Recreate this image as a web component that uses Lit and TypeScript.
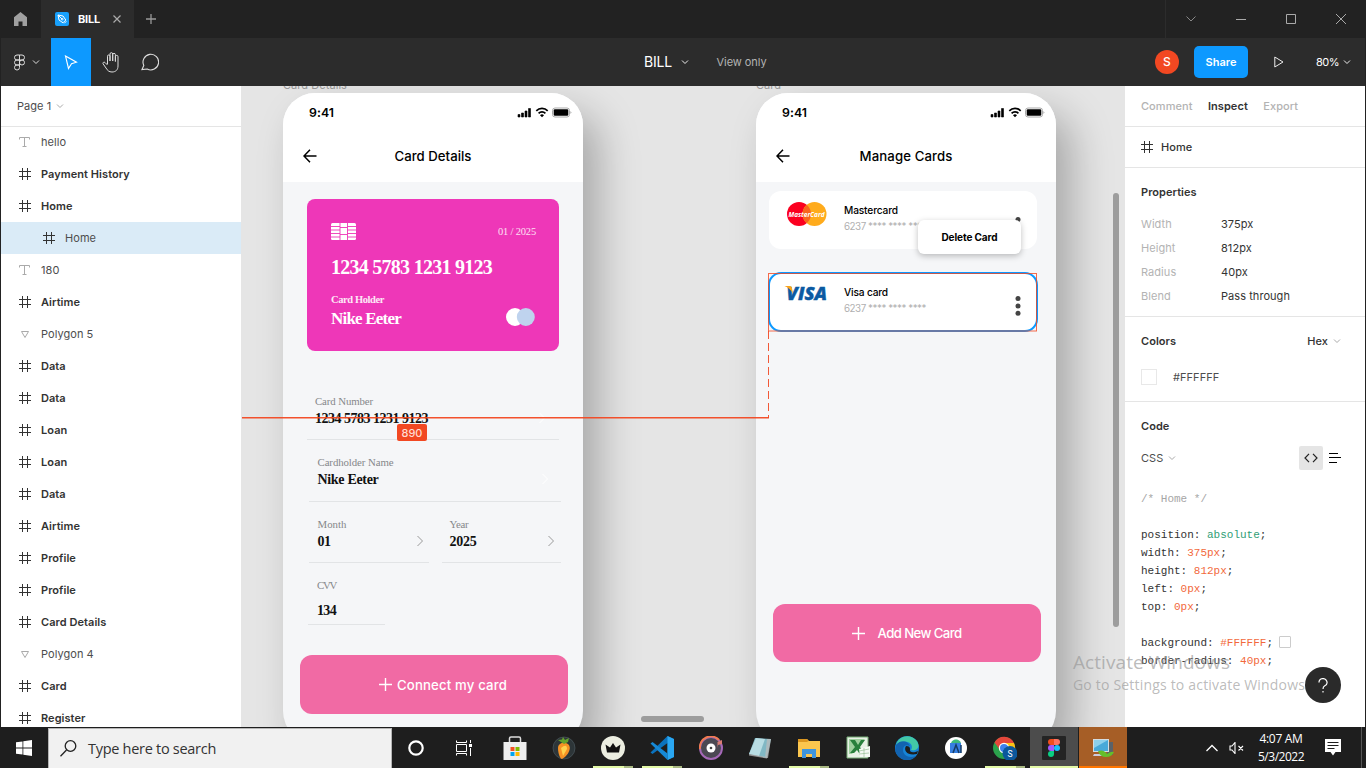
import { LitElement, html, svg, css } from "lit";
import { customElement, property } from "lit/decorators.js";

/** One line of text whose tracking is set so that it fills a given width. */
@customElement("fit-text")
class FitText extends LitElement {
  @property({ type: Number }) w = 0;
  @property() text = "";
  static styles = css`
    :host { display: block; white-space: pre; flex: none; }
    span { display: inline-block; }
  `;
  render() { return html`<span>${this.text}</span>`; }
  updated() {
    const s = this.renderRoot.querySelector("span") as HTMLElement;
    if (!s || !this.w) return;
    s.style.letterSpacing = "0px";
    const natural = s.getBoundingClientRect().width;
    s.style.letterSpacing = `${(this.w - natural) / this.text.length}px`;
  }
}

const fit = (text: string, w: number, cls: string) =>
  html`<fit-text class=${cls} .text=${text} .w=${w}></fit-text>`;

const hash = html`<svg class="ic" width="12" height="12" viewBox="0 0 12 12" fill="none" stroke="#333"><path d="M3.5 0v12M8.500 0v12M0 3.500h12M0 8.500h12"/></svg>`;
const tee = html`<svg class="ic" width="12" height="12" viewBox="0 0 12 12" fill="none" stroke="#aaa"><path d="M.5 3.500v-2h10v2M5.500 1.500v9.500M3.500 10.500h4"/></svg>`;
const poly = html`<svg class="ic" width="12" height="12" viewBox="0 0 12 12" fill="none" stroke="#aaa"><path d="M2.500 3.500h7L6 9.500z"/></svg>`;
const chev = (c: string, w = 8) => html`<svg width=${w} height=${w} viewBox="0 0 8 8" fill="none" stroke=${c} stroke-width="1"><path d="M1 2.500l3 3 3-3"/></svg>`;
const right = (c: string) => html`<svg width="7" height="12" viewBox="0 0 7 12" fill="none" stroke=${c}><path d="M.5 1l5 5-5 5"/></svg>`;
const plus = html`<svg width="13" height="13" viewBox="0 0 13 13" stroke="#fff" stroke-width="1.400"><path d="M6.500 0v13M0 6.500h13"/></svg>`;

const LAYERS: [string, string][] = [
  ["t", "hello"], ["f", "Payment History"], ["f", "Home"], ["s", "Home"], ["t", "180"],
  ["f", "Airtime"], ["p", "Polygon 5"], ["f", "Data"], ["f", "Data"], ["f", "Loan"], ["f", "Loan"],
  ["f", "Data"], ["f", "Airtime"], ["f", "Profile"], ["f", "Profile"], ["f", "Card Details"],
  ["p", "Polygon 4"], ["f", "Card"], ["f", "Register"],
];

@customElement("layer-panel")
class LayerPanel extends LitElement {
  static styles = css`
    :host { display: block; width: 240px; background: #fff; overflow: hidden; font: 11px/16px Inter, sans-serif; letter-spacing: .055px; color: #333; }
    .head { height: 40px; border-bottom: 1px solid #e5e5e5; margin-bottom: -1px; display: flex; align-items: center; padding-left: 16px; gap: 5px; color: #4c4c4c; }
    .row { height: 32px; display: flex; align-items: center; padding-left: 18px; gap: 10px; position: relative; }
    .f { font-weight: 600; }
    .t, .p, .s { color: #4d4d4d; }
    .s { background: #daebf7; padding-left: 42px; }
  `;
  render() {
    return html`<div class="head"><span>Page 1</span>${chev("#aaa")}</div>
      ${LAYERS.map(([k, n]) => html`<div class="row ${k}">${k === "t" ? tee : k === "p" ? poly : hash}<span>${n}</span></div>`)}`;
  }
}

@customElement("inspect-panel")
class InspectPanel extends LitElement {
  static styles = css`
    :host { display: block; width: 240px; background: #fff; overflow: hidden; font: 11px/16px Inter, sans-serif; letter-spacing: .055px; color: #333; }
    .sec { border-bottom: 1px solid #e5e5e5; box-sizing: border-box; padding: 0 16px; }
    .row { display: flex; align-items: center; }
    .tabs { height: 41px; gap: 15.500px; font-weight: 500; color: #b3b3b3; }
    .on { color: #333; font-weight: 600; }
    .name { height: 41px; gap: 8px; font-weight: 500; }
    .props { height: 149px; padding-top: 12px; }
    .prop { height: 24px; }
    .prop span:first-child { width: 80px; color: #b3b3b3; }
    .ttl { height: 24px; margin-bottom: 8px; font-weight: 600; }
    .colors { height: 85px; padding-top: 12px; }
    .colors .ttl { margin-bottom: 12px; }
    .hex { margin-left: auto; margin-right: 5px; font-weight: 500; }
    .ttl svg { margin-right: 8px; }
    .sw { width: 14px; height: 14px; border: 1px solid #e8e8e8; margin-right: 16px; }
    .val { color: #4d4d4d; }
    .code { padding: 12px 16px 0; }
    .lang { height: 24px; gap: 5px; color: #4d4d4d; }
    .btn { margin-left: auto; width: 24px; height: 24px; background: #e5e5e5; border-radius: 2px; display: flex; align-items: center; justify-content: center; }
    .lines { margin: 0 8px 0 1px; }
    pre { margin: 20px 0 0; font: 11px/18px "Liberation Mono", monospace; letter-spacing: 0; color: #333; }
    .c { color: #a6a6a6; } .g { color: #2f9e75; } .o { color: #f2693c; }
    .box { display: inline-block; width: 10px; height: 10px; border: 1px solid #ccc; border-radius: 1px; vertical-align: -2px; margin-left: 6px; }
  `;
  render() {
    const p = (a: string, b: string) => html`<div class="row prop"><span>${a}</span><span>${b}</span></div>`;
    const o = (s: string) => html`<span class="o">${s}</span>`;
    return html`
      <div class="sec row tabs"><span>Comment</span><span class="on">Inspect</span><span>Export</span></div>
      <div class="sec row name">${hash}<span>Home</span></div>
      <div class="sec props"><div class="row ttl">Properties</div>
        ${p("Width", "375px")}${p("Height", "812px")}${p("Radius", "40px")}${p("Blend", "Pass through")}</div>
      <div class="sec colors"><div class="row ttl">Colors<span class="hex">Hex</span>${chev("#aaa")}</div>
        <div class="row prop"><div class="sw"></div><div class="val">#FFFFFF</div></div></div>
      <div class="code"><div class="row ttl">Code</div>
        <div class="row lang">CSS ${chev("#aaa")}
          <div class="btn"><svg width="14" height="10" viewBox="0 0 14 10" fill="none" stroke="#222" stroke-width="1.200"><path d="M5 .8L1 5l4 4.200M9 .8L13 5 9 9.200"/></svg></div>
          <svg class="lines" width="12" height="10" viewBox="0 0 12 10" stroke="#000"><path d="M0 .5h9M0 4.500h12M0 9.500h8"/></svg></div>
        <pre><span class="c">/* Home */</span>

position: <span class="g">absolute</span>;
width: ${o("375px")};
height: ${o("812px")};
left: ${o("0px")};
top: ${o("0px")};

background: ${o("#FFFFFF")};<span class="box"></span>
border-radius: ${o("40px")};</pre></div>`;
  }
}

const phoneCss = css`
  :host { display: block; box-sizing: border-box; width: 300px; height: 650px; border-radius: 32px; overflow: hidden; background: #f5f6f8; font-family: Inter, sans-serif; color: #000; }
  .head { height: 89px; background: #fff; }
  .status { height: 38px; display: flex; align-items: center; padding: 0 11px 0 26px; justify-content: space-between; }
  .time { font-size: 12.300px; font-weight: 600; line-height: 16px; margin-top: 1px; }
  .bar { height: 51px; display: grid; grid-template-columns: 60px 1fr 60px; align-items: center; justify-items: center; }
  .bar svg { justify-self: start; margin: 0 0 1px 19.500px; }
  .title { font-size: 13.200px; font-weight: 500; line-height: 18px; margin-bottom: 2px; }
  .cta { width: 268px; height: 58px; border-radius: 12px; background: #f16aa4; box-sizing: border-box; display: flex; align-items: center; color: #fff; }
  .ctat { font-size: 13.200px; font-weight: 500; line-height: 18px; }
`;

const phoneHead = (title: string, w: number) => html`<div class="head">
  <div class="status">${fit("9:41", 25, "time")}
    <svg width="55" height="11" viewBox="0 0 55 11"><path d="M1 7.500h2V10H1zM4.500 6h2v4h-2zM8 4h2v6H8zM11.500 1.500h2V10h-2z" stroke="#000" stroke-width=".6"/>
      <g fill="none" stroke="#000" stroke-width="1.700"><path d="M19.300 3.800a8 8 0 0 1 11.400 0M21.600 6.300a4.800 4.800 0 0 1 6.800 0"/></g><path d="M23 8.200a3 3 0 0 1 4 0L25 10.300z"/>
      <rect x="35.500" y="1" width="17" height="9" rx="2.500" fill="none" stroke="#aaa"/><rect x="36.700" y="2.300" width="14.600" height="6.400" rx="1.200"/><path d="M53.500 4v3l1-1.500z" fill="#999"/></svg></div>
  <div class="bar"><svg width="14" height="14" viewBox="0 0 14 14" fill="none" stroke="#000" stroke-width="1.500"><path d="M7 .8L1 7l6 6.200M1 7h12.500"/></svg>${fit(title, w, "title")}</div></div>`;

@customElement("phone-details")
class PhoneDetails extends LitElement {
  static styles = [phoneCss, css`
    .body { padding: 16.500px 0 0; font-family: "Liberation Serif", serif; }
    .card { margin-left: 24px; width: 252px; height: 152px; box-sizing: border-box; border-radius: 8px; background: #ee37b8; color: #fff; padding: 24.500px 23px 0 24px; }
    .between { display: flex; justify-content: space-between; align-items: center; }
    .date { font-size: 10.500px; line-height: 14px; color: #fde0f4; }
    .num { font-size: 20px; font-weight: 700; line-height: 24px; margin-top: 15px; }
    .holder { font-size: 10.500px; line-height: 14px; font-weight: 700; margin-top: 14px; color: #fde8f6; }
    .who { font-size: 17px; font-weight: 700; line-height: 23px; }
    .who + svg { margin-bottom: 3px; }
    .field { box-sizing: border-box; border-bottom: 1px solid #e2e4e6; margin-left: 26px; width: 252px; height: 62px; padding: 14.500px 12px 0 8.500px; display: grid; grid-template-columns: 1fr auto; align-content: start; }
    .lab { font-size: 10.800px; line-height: 14px; color: #85878a; grid-column: 1 / 3; }
    .val { font-size: 14px; line-height: 20px; font-weight: 700; color: #111; margin-top: 1px; }
    .first { margin-left: 24px; margin-top: 33.500px; height: 56px; padding: 9.500px 13px 0 8px; }
    .pair { display: flex; gap: 13px; margin-left: 26px; }
    .pair .field { margin: 0; width: 120px; height: 61px; padding-right: 5px; }
    .pair .field + .field { padding-left: 7.500px; padding-right: 6px; width: 119px; }
    .field svg { align-self: center; }
    .cvv { margin-left: 25px; width: 77px; padding-top: 15px; padding-left: 9px; height: 62px; }
    .cvv .val { margin-top: 9px; }
    .cta { height: 59px; margin: 30px 0 0 17px; padding-left: 79px; gap: 5px; font-family: Inter, sans-serif; }
  `];
  render() {
    return html`${phoneHead("Card Details", 77)}<div class="body">
      <div class="card">
        <div class="between"><svg width="25" height="17" viewBox="0 0 25 17"><rect width="25" height="17" rx="1.500" fill="#fff"/><path d="M0 3.500h9M16 3.500h9M0 7h9M16 7h9M0 10.500h9M16 10.500h9M0 14h9M16 14h9M9 4.500h7M9 11.500h7M9 0v17M16.500 0v17" stroke="#ee37b8" stroke-width=".9"/></svg>${fit("01 / 2025", 38, "date")}</div>
        ${fit("1234 5783 1231 9123", 161, "num")}
        ${fit("Card Holder", 53, "holder")}
        <div class="between">${fit("Nike Eeter", 70, "who")}<svg width="30" height="18" viewBox="0 0 30 18"><circle cx="9" cy="9" r="9" fill="#fff"/><circle cx="19.800" cy="9" r="9" fill="#bfd3ee"/></svg></div>
      </div>
      <div class="field first">${fit("Card Number", 58, "lab")}${fit("1234 5783 1231 9123", 113, "val")}${right("#fff")}</div>
      <div class="field">${fit("Cardholder Name", 76, "lab")}${fit("Nike Eeter", 61, "val")}${right("#fff")}</div>
      <div class="pair">
        <div class="field">${fit("Month", 29, "lab")}${fit("01", 13, "val")}${right("#999")}</div>
        <div class="field">${fit("Year", 19, "lab")}${fit("2025", 27, "val")}${right("#999")}</div></div>
      <div class="field cvv">${fit("CVV", 19, "lab")}${fit("134", 19, "val")}</div>
      <div class="cta">${plus}${fit("Connect my card", 110, "ctat")}</div></div>`;
  }
}

@customElement("phone-manage")
class PhoneManage extends LitElement {
  static styles = [phoneCss, css`
    .body { padding: 9px 0 0 13px; }
    .pay { width: 268px; height: 58px; box-sizing: border-box; border-radius: 12px; background: #fff; display: flex; padding: 11px 16px 0 15px; }
    .pay + .pay { margin-top: 24px; }
    .logo { width: 60px; flex: none; }
    .nm { font-size: 10.200px; line-height: 16px; font-weight: 500; }
    .no { font-size: 9.800px; line-height: 18px; color: #b0b0b0; }
    .dots { margin-left: auto; margin-top: 11px; }
    .pop-open .dots { margin-top: 14px; }
    .sel { outline: 2px solid #0d99ff; outline-offset: -1px; }
    .cta { margin: 273px 0 0 3.500px; padding-left: 79px; gap: 13px; }
    .pop { position: absolute; left: 162px; top: 127px; width: 103px; height: 34px; border-radius: 6px; background: #fff; box-shadow: 0 2px 6px rgba(0,0,0,.25); display: flex; align-items: center; justify-content: center; }
    .del { font-size: 10px; line-height: 14px; font-weight: 700; }
    .mc { font: italic 700 7.200px "Open Sans", sans-serif; } .vs { font: italic 800 18px "Open Sans", sans-serif; }
  `];
  render() {
    const pay = (logo: unknown, n: string, w: number, c: string) => html`<div class="pay ${c}"><div class="logo">${logo}</div>
      <div>${fit(n, w, "nm")}${fit("6237 **** **** ****", 82, "no")}</div>
      <svg class="dots" width="6" height="22" viewBox="0 0 6 22" fill="#444"><circle cx="3" cy="3.500" r="2.500"/><circle cx="3" cy="11" r="2.500"/><circle cx="3" cy="18.200" r="2.500"/></svg></div>`;
    return html`${phoneHead("Manage Cards", 93)}<div class="body">
      ${pay(html`<svg width="46" height="26" viewBox="0 0 46 26"><circle cx="15" cy="12" r="12" fill="#fb0020"/><circle cx="30.500" cy="12" r="12" fill="#ffab1c"/><path d="M22.750 2.800a12 12 0 0 1 0 18.400a12 12 0 0 1 0-18.400z" fill="#f9651d"/><text class="mc" x="4.500" y="14.800" textLength="36" lengthAdjust="spacingAndGlyphs" fill="#fff">MasterCard</text></svg>`, "Mastercard", 54, "pop-open")}
      ${pay(html`<svg width="46" height="26" viewBox="0 0 46 26"><text class="vs" x="2.500" y="15.600" textLength="40.500" lengthAdjust="spacingAndGlyphs" fill="#0b5aa2" stroke="#0b5aa2" stroke-width=".4">VISA</text><path d="M.5 2h5.500q1.500 0 1.800 1.600l1.200 6Q6 4 .5 2z" fill="#f9a51a"/></svg>`, "Visa card", 44, "sel")}
      <div class="cta">${plus}${fit("Add New Card", 84, "ctat")}</div></div>
      <div class="pop">${fit("Delete Card", 56, "del")}</div>`;
  }
}

@customElement("design-canvas")
class DesignCanvas extends LitElement {
  static styles = css`
    :host { display: block; flex: 1; position: relative; overflow: hidden; background: #e5e5e5; font: 11px/14px Inter, sans-serif; }
    .a, .b, .la, .lb, .v, .h, .ov, .m { position: absolute; }
    .a { left: 42px; top: 7px; } .b { left: 515px; top: 7px; }
    .a, .b { box-shadow: 16px 20px 40px rgba(0,0,0,.27); }
    .la, .lb { top: -8px; color: #999; } .la { left: 42px; } .lb { left: 515px; }
    .v { left: 872px; top: 107px; width: 6px; height: 434px; border-radius: 3px; background: #9d9d9d; }
    .h { left: 400px; top: 630px; width: 63px; height: 6px; border-radius: 3px; background: #9d9d9d; }
    .ov { left: 0; top: 0; }
    .m { left: 156px; top: 338px; width: 30px; height: 17px; border-radius: 2px; background: #f24822; color: #ffdcd3; font-weight: 500; display: flex; align-items: center; justify-content: center; }
  `;
  render() {
    return html`${fit("Card Details", 64, "la")}${fit("Card", 25, "lb")}
      <phone-details class="a"></phone-details><phone-manage class="b"></phone-manage>
      <svg class="ov" width="884" height="641" viewBox="0 0 884 641" fill="none" stroke="#f24822"><path d="M1 331.700h527" stroke-opacity=".95" stroke-width="1.400"/><path d="M527.500 245v87" stroke-dasharray="8 4" stroke-opacity=".9"/><rect x="527.500" y="187.500" width="268" height="57.500" stroke-opacity=".8"/></svg>
      <div class="m">890</div><div class="v"></div><div class="h"></div>`;
  }
}

const g = (inner: unknown) => html`<svg width="24" height="24" viewBox="0 0 24 24">${inner}</svg>`;
const APPS: [unknown, string][] = [
  [g(svg`<path d="M6.500 7V2.500q0-1.500 1.500-1.500h8q1.500 0 1.500 1.500V7" fill="none" stroke="#ddd" stroke-width="1.500"/><path d="M.5 6h23v18H.5z" fill="#eee"/><path d="M7.500 11h4v4h-4z" fill="#f25022"/><path d="M12.500 11h4v4h-4z" fill="#7fba00"/><path d="M7.500 16h4v4h-4z" fill="#00a4ef"/><path d="M12.500 16h4v4h-4z" fill="#ffb900"/>`), ""],
  [g(svg`<circle cx="12" cy="12" r="11" fill="#2d3538" stroke="#536066" stroke-width=".6"/><path d="M6 12c0-5 7-7 11-3 3 5-3 12-7 14-2 0-4-6-4-11z" fill="#f79325"/><path d="M9 12q6-5 6 1l-4 7z" fill="#ffd24d"/><path d="M12 8L6 4l4-.5L11 1l2 3 4-2-1 4z" fill="#65a32d"/>`), ""],
  [g(svg`<circle cx="12" cy="12" r="12" fill="#eceee1"/><path d="M4.500 8.500L9 11.500 12 7l3 4.500 4.500-3-1.500 8H6z" fill="#111"/>`), "run"],
  [g(svg`<path d="M17.500 0L24 3v18l-6.500 3L17.500 7 2.500 18 .5 16.500z" fill="#0b72bd"/><path d="M17.500 0L24 3v18l-6.500 3z" fill="#2aa7f2"/><path d="M.5 7.500l2-1.500L17.500 17.500V24z" fill="#1689d6"/>`), "run"],
  [g(svg`<circle cx="12" cy="12" r="11" fill="#4b4853" stroke="#a568b8" stroke-width="2"/><path d="M1 13A11 11 0 0 1 20 4" fill="none" stroke="#f17b50" stroke-width="2"/><circle cx="12" cy="12" r="4.500" fill="#fff"/><circle cx="12" cy="12" r="1.300" fill="#444"/><path d="M18.500 12V6L23 4v4l-4 1" fill="#d97b73"/>`), ""],
  [g(svg`<path d="M7 2l16 1-4 19-18-4z" fill="#81b8c4"/><path d="M8 2l9 1-6 17-10-2z" fill="#b8dde3"/><path d="M1 18l18 3v1.500L1 19.500zM19 3l4 0-3 19-3 0z" fill="#bbb" opacity=".75"/>`), ""],
  [g(svg`<path d="M1 3h9l2 2h11v16H1z" fill="#fbc64e"/><path d="M1 3h9l1.500 2L10 6H1z" fill="#dc9720"/><path d="M5 13h14v9h-4v-4H9v4H5z" fill="#3e95dd"/>`), "run"],
  [g(svg`<path d="M1 1h21v21H1z" fill="#e7f1e5" stroke="#76ad76"/><path d="M3 3h16L6 18H3z" fill="#9fd09f"/><path d="M4 4h5l3 5 3-5h4l-5 7 4 6h-5l-2-3-3 3H4l5-6z" fill="#28803c"/><path d="M13 13l11-3v11H14z" fill="#f5faf4"/><path d="M13 15l10-2M13 18l10-1M18 12v9" stroke="#8bb88b" stroke-width=".6"/>`), ""],
  [g(svg`<circle cx="12" cy="12" r="12" fill="#1684d8"/><path d="M1 9C3 0 15-3 21 4c6 7 0 12-5 10 3-5-2-9-7-8-4 0-7 2-8 3z" fill="#43c9a6"/><path d="M1 9c5-6 12-4 14 1-4-2-7 0-7 4s4 9 13 6c-6 7-18 5-21-6z" fill="#1263b0"/><path d="M11 10c-3 5 2 10 11 8l1-3c-4 2-9 2-8-2 0-2-1-3-4-3z" fill="#1e1e1e"/>`), ""],
  [g(svg`<circle cx="12" cy="12" r="11" fill="#fff"/><path d="M7 8c0-6 10-6 10 0z" fill="#3dba7d"/><path d="M6 7h11v10H6z" fill="#377fe0"/><path d="M9 17l3-8 3 8M17 9v8" stroke="#153b65" fill="none" stroke-width="1.500"/>`), ""],
  [g(svg`<circle cx="11" cy="12" r="11" fill="#2ba24c"/><path d="M1.500 6.500A11 11 0 0 1 21 7H11L7 14z" fill="#e6473b"/><path d="M11 7h10a11 11 0 0 1-9 16l4-8z" fill="#fbc116"/><circle cx="11" cy="12" r="5.200" fill="#fff"/><circle cx="11" cy="12" r="4" fill="#3e82ee"/><circle cx="17" cy="17.500" r="7.500" fill="#0b579b"/><text x="14.500" y="20.500" font-size="8.500" font-family="Roboto" fill="#fff">S</text>`), "run"],
  [g(svg`<rect width="24" height="24" rx="1" fill="#242424"/><path d="M12 3H9a3 3 0 0 0 0 6h3z" fill="#f24e1e"/><path d="M12 3h3a3 3 0 0 1 0 6h-3z" fill="#ff7262"/><path d="M12 9H9a3 3 0 0 0 0 6h3z" fill="#a259ff"/><circle cx="15" cy="12" r="3" fill="#1abcfe"/><path d="M9 15h3v3a3 3 0 1 1-3-3z" fill="#0acf83"/>`), "fig"],
  [g(svg`<path d="M17 6h5v13h-6z" fill="#5a6269"/><path d="M2 3h16v13H2z" fill="#d3dce0"/><path d="M3 4h14v11H3z" fill="#48a9d9"/><path d="M3 4h14L3 12z" fill="#8dd0ec"/><path d="M3 18h10v2H2z" fill="#ccd"/><path d="M7 15q6-2 9 3 4-3 7-2-2 5-8 5-6 0-8-6z" fill="#65be2b"/>`), "pc"],
];

@customElement("task-bar")
class TaskBar extends LitElement {
  static styles = css`
    :host { display: flex; height: 41px; background: #1e1e1e; color: #fff; font-family: "Open Sans", sans-serif; }
    .start { width: 48px; display: flex; align-items: center; justify-content: center; }
    .search { height: 39px; margin-top: 1px; border: 1px solid #b5b5b5; border-bottom: 0; background: #f1f1f1; display: flex; align-items: center; padding-left: 11px; width: 331px; gap: 11px; }
    .q { color: #333; font-size: 14.500px; line-height: 20px; }
    .sys { width: 48px; display: flex; align-items: center; justify-content: center; }
    .sys + .sys { margin-right: 2px; }
    .app { width: 49px; display: flex; flex-direction: column; align-items: center; padding-top: 9px; box-sizing: border-box; }
    .app svg { flex: none; }
    .run::after { content: ""; width: 40px; height: 2px; margin-top: 6px; background: linear-gradient(90deg, #e3f9a7 31px, #a9b983 31px); }
    .fig, .pc { width: 48px; margin-left: 1px; }
    .fig { background: #4c4c4c; border-bottom: 2px solid #e3f9a7; }
    .pc { background: #a65e26; border-bottom: 2px solid #ff7600; }
    .tray { margin-left: auto; display: flex; align-items: center; }
    .vol { margin-left: 11px; }
    .clock { margin-left: 14px; display: flex; flex-direction: column; align-items: center; font-size: 12px; line-height: 18px; }
    .note { margin: 0 20px 0 21px; }
    .edge { width: 1px; align-self: stretch; background: #555; margin-right: 4px; }
  `;
  render() {
    return html`<div class="start"><svg width="16" height="16" viewBox="0 0 16 16" fill="#fff"><path d="M0 2.300l6.500-.9v6.200H0zM7.300 1.300L16 0v7.600H7.300zM0 8.400h6.500v6.200L0 13.700zM7.300 8.400H16V16l-8.700-1.300z"/></svg></div>
      <div class="search"><svg width="17" height="17" viewBox="0 0 17 17" fill="none" stroke="#222" stroke-width="1.300"><circle cx="10.500" cy="6" r="5.300"/><path d="M6.500 10L.5 16.200"/></svg>${fit("Type here to search", 128, "q")}</div>
      <div class="sys"><svg width="16" height="16" viewBox="0 0 16 16"><circle cx="8" cy="8" r="6.700" fill="none" stroke="#fff" stroke-width="2.200"/></svg></div>
      <div class="sys"><svg width="16" height="16" viewBox="0 0 16 16" fill="none" stroke="#fff"><path d="M.5.500V2.500h10V.5M.5 15.500V13.500h10v2M.5 4.500h10v7H.5zM14.500 0v3M14.500 8v8"/><path d="M13 4h3v3h-3z" fill="#fff" stroke="none"/></svg></div>
      ${APPS.map(([i, c]) => html`<div class="app ${c}">${i}</div>`)}
      <div class="tray">
        <svg width="12" height="8" viewBox="0 0 12 8" fill="none" stroke="#fff" stroke-width="1.300"><path d="M.5 7L6 1.500 11.500 7"/></svg>
        <svg class="vol" width="15" height="12" viewBox="0 0 15 12" fill="none" stroke="#fff" stroke-width="1.100"><path d="M1 4v4h2l3 3.500V.5L3 4zM9.500 4l4.500 4.500M14 4L9.500 8.500"/></svg>
        <div class="clock">${fit("4:07 AM", 43, "x")}${fit("5/3/2022", 46, "x")}</div>
        <svg class="note" width="16" height="17" viewBox="0 0 16 17"><path d="M0 0h16v13h-5.500L8 16.500 5.500 13H0z" fill="#fff"/><path d="M2.500 3.500h11M2.500 6.500h11M2.500 9.500h7" stroke="#1e1e1e"/></svg>
      </div><div class="edge"></div>`;
  }
}

@customElement("app-root")
class AppRoot extends LitElement {
  static styles = css`
    :host { display: flex; flex-direction: column; width: 1366px; height: 768px; overflow: hidden; position: relative; background: #222; font: 11px/16px Inter, sans-serif; color: #fff; }
    .tabs { height: 38px; display: flex; background: #222; flex: none; }
    .home { width: 41px; display: flex; align-items: center; justify-content: center; box-sizing: border-box; }
    .tab { width: 93px; background: #2c2c2c; display: flex; align-items: center; padding-left: 14px; box-sizing: border-box; }
    .tabn { margin: 0 13px 0 9px; font-weight: 700; font-size: 11px; }
    .add { margin: 14px 0 0 12px; }
    .win { margin-left: auto; width: 200px; border-left: 1px solid #2c2c2c; display: grid; grid-template-columns: repeat(4, 50px); align-items: center; justify-items: center; }
    .tools { height: 48px; background: #2c2c2c; margin: 0 1px; display: flex; align-items: center; flex: none; }
    .fg { width: 50px; display: flex; align-items: center; gap: 6px; padding-left: 12px; box-sizing: border-box; }
    .tool { width: 40px; height: 48px; display: flex; align-items: center; justify-content: center; }
    .talk svg { margin-right: 2px; }
    .blue { background: #0d99ff; }
    .file { margin-left: 473px; font-size: 14px; line-height: 20px; }
    .file + svg { margin-left: 9px; }
    .view { margin-left: 27.500px; color: #b3b3b3; }
    .av { margin-left: auto; width: 24px; height: 24px; border-radius: 50%; background: #f24822; display: flex; align-items: center; justify-content: center; font-size: 12px; font-weight: 500; }
    .share { margin: 0 26px 0 15px; width: 54px; height: 32px; border-radius: 5px; background: #0d99ff; display: flex; align-items: center; justify-content: center; font-weight: 600; }
    .zoom { margin: 0 4px 0 32px; }
    .zoom + svg { margin-right: 14px; }
    .main { flex: 1; min-height: 0; display: flex; margin: 0 1px; }
    .mark { position: absolute; left: 1073px; top: 650px; color: rgba(150,150,150,.65); font-family: "Open Sans", sans-serif; }
    .m1 { font-size: 19px; line-height: 25px; }
    .m2 { font-size: 14px; line-height: 20px; }
    .help { position: absolute; left: 1305px; top: 667px; width: 36px; height: 36px; border-radius: 50%; background: #2a2a2a; display: flex; align-items: center; justify-content: center; }
  `;
  render() {
    return html`
      <div class="tabs">
        <div class="home"><svg width="13" height="14" viewBox="0 0 13 14" fill="#a0a0a0"><path d="M6.500 0L13 5.200V14H8.500V9.500h-4V14H0V5.200z"/></svg></div>
        <div class="tab"><svg width="14" height="14" viewBox="0 0 14 14"><rect width="14" height="14" rx="2" fill="#18a0fb"/><g fill="none" stroke="#fff" stroke-width="1"><path d="M3 3l5 1 2.800 4L8 10.800 4 8zM3 3l4 4M9.300 11.300l2-2"/><circle cx="7.200" cy="7.200" r=".8"/></g></svg>${fit("BILL", 22, "tabn")}<svg width="8" height="8" viewBox="0 0 8 8" stroke="#aaa" stroke-width="1.200"><path d="M.5.500l7 7M7.500.500l-7 7"/></svg></div>
        <svg class="add" width="10" height="10" viewBox="0 0 10 10" stroke="#999" stroke-width="1.300"><path d="M5 0v10M0 5h10"/></svg>
        <div class="win">
          <svg width="10" height="6" viewBox="0 0 10 6" fill="none" stroke="#888"><path d="M.5.500L5 5 9.500.500"/></svg>
          <svg width="10" height="2" viewBox="0 0 10 2"><path d="M0 1h10v1H0z" fill="#aaa"/></svg>
          <svg width="10" height="10" viewBox="0 0 10 10" fill="none" stroke="#aaa"><path d="M.5.500h9v9h-9z"/></svg>
          <svg width="10" height="10" viewBox="0 0 10 10" stroke="#aaa"><path d="M0 0l10 10M10 0L0 10"/></svg></div>
      </div>
      <div class="tools">
        <div class="fg"><svg width="13" height="17" viewBox="0 0 13 17" fill="none" stroke="#ddd"><path d="M6.500 1H4a2.500 2.500 0 0 0 0 5h2.500zM6.500 1H9a2.500 2.500 0 0 1 0 5H6.500zM6.500 6H4a2.500 2.500 0 0 0 0 5h2.500zM6.500 11H4a2.500 2.500 0 1 0 2.500 2.500z"/><circle cx="9" cy="8.500" r="2.500"/></svg>${chev("#ddd")}</div>
        <div class="tool blue"><svg width="14" height="15" viewBox="0 0 14 15" fill="none" stroke="#fff" stroke-width="1.100"><path d="M1.500 1l11 6.200-5 1.600-3 4.700z"/></svg></div>
        <div class="tool"><svg width="19" height="21" viewBox="0 0 19 21" fill="none" stroke="#ddd"><path d="M5.500 12V4.200a1.200 1.200 0 0 1 2.500 0V9M8 9V2a1.300 1.300 0 0 1 2.700 0v7M10.700 9V2.700a1.300 1.300 0 0 1 2.700 0V9.500M13.400 9.500V4.700a1.300 1.300 0 0 1 2.600 0V14c0 4-2.500 6-6 6-3 0-4.500-1.500-6-4L1 11.700c-.5-1.200 1-2 2-1.200L5.500 13"/></svg></div>
        <div class="tool talk"><svg width="18" height="18" viewBox="0 0 18 18" fill="none" stroke="#ddd" stroke-width="1.100"><path d="M1 16.500l1.800-4A7.800 7.800 0 1 1 6.200 16z"/></svg></div>
        ${fit("BILL", 28, "file")}${chev("#eee")}
        ${fit("View only", 50, "view")}
        <div class="av">S</div><div class="share">Share</div>
        <svg width="10" height="12" viewBox="0 0 10 12" fill="none" stroke="#eee"><path d="M.8 1l8.200 5-8.200 5z"/></svg>
        ${fit("80%", 23, "zoom")}${chev("#eee")}
      </div>
      <div class="main"><layer-panel></layer-panel><design-canvas></design-canvas><inspect-panel></inspect-panel></div>
      <task-bar></task-bar>
      <div class="mark">${fit("Activate Windows", 157, "m1")}${fit("Go to Settings to activate Windows.", 236, "m2")}</div>
      <div class="help"><svg width="10" height="15" viewBox="0 0 10 15" fill="none" stroke="#fff" stroke-width="1.200"><path d="M1 4.500a4 3.800 0 1 1 5.800 3.300Q5 8.800 5 11M5 13v1.500"/></svg></div>`;
  }
}
